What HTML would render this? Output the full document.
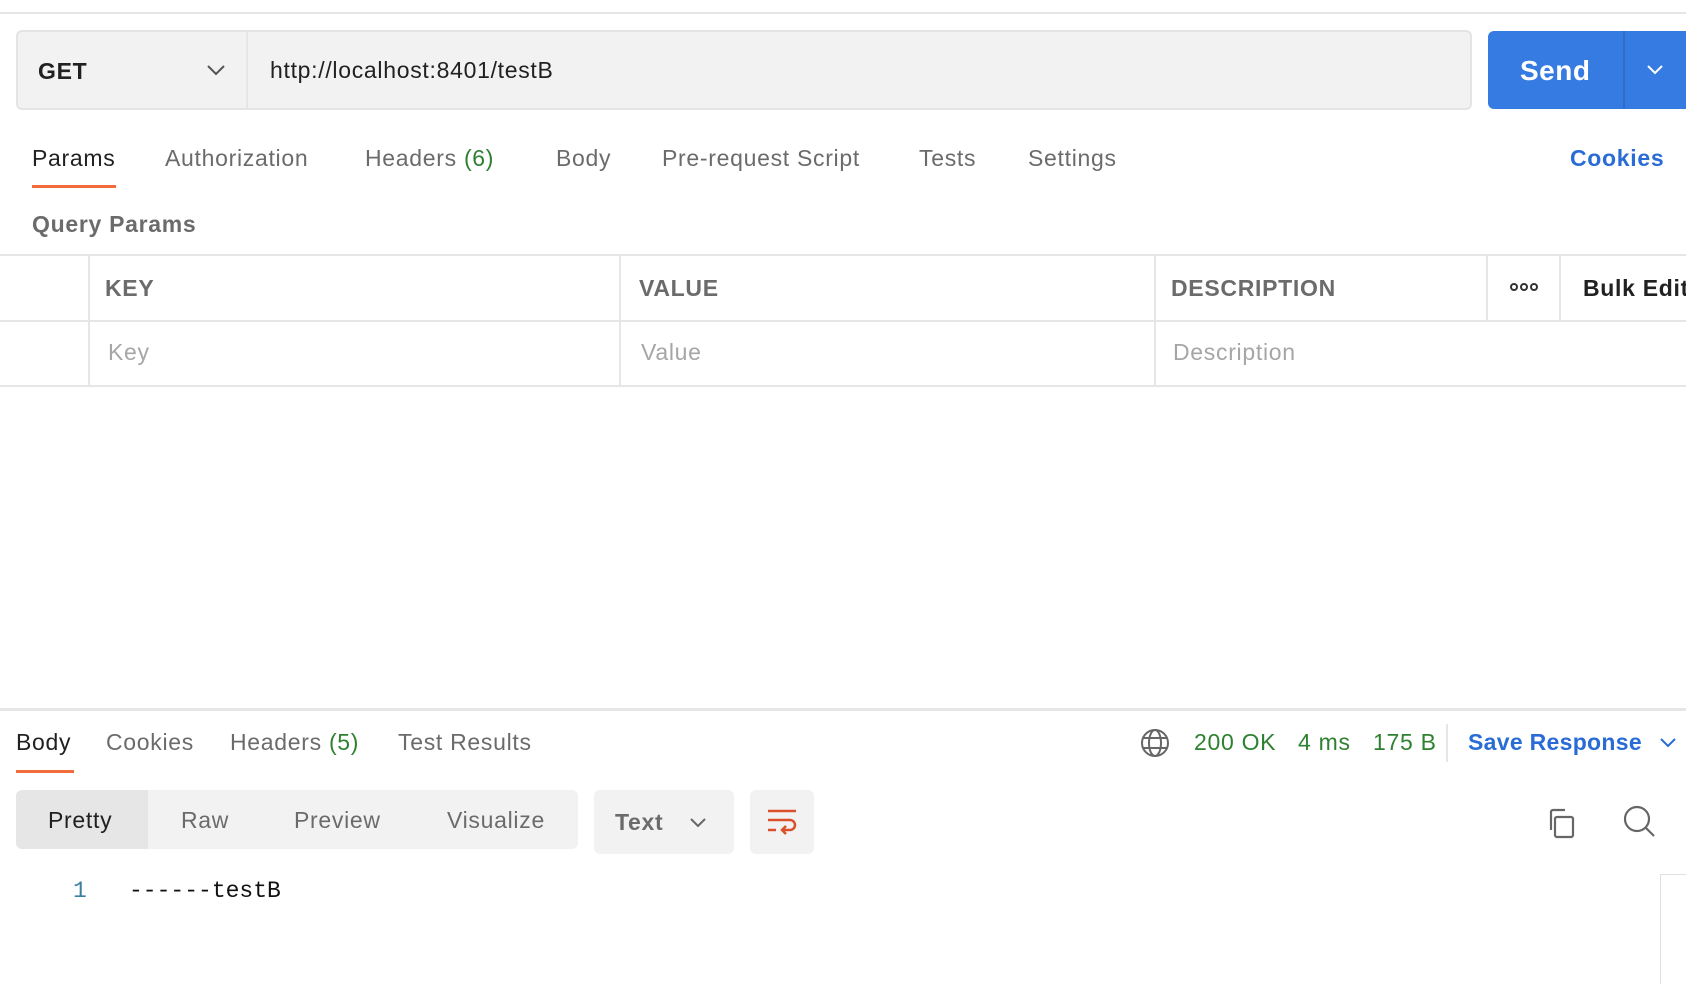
<!DOCTYPE html><html><head><style>
*{margin:0;padding:0;box-sizing:border-box}
body{width:1686px;height:974px;overflow:hidden;background:#fff;font-family:"Liberation Sans",sans-serif;position:relative;color:#6b6b6b}
.a{position:absolute;white-space:nowrap}
.t{font-size:23px;line-height:28px;letter-spacing:0.7px}
.hl{position:absolute;background:#e6e6e6;height:2px}
.vl{position:absolute;background:#e6e6e6;width:2px}
</style></head><body>
<div class="hl" style="left:0;top:12px;width:1686px"></div>
<div class="a" style="left:16px;top:30px;width:1456px;height:80px;background:#f2f2f2;border:2px solid #e4e4e4;border-radius:6px"></div>
<div class="vl" style="left:246px;top:31px;height:78px"></div>
<div class="a t" style="left:38px;top:57px;color:#212121;font-weight:bold">GET</div>
<svg class="a" style="left:206px;top:64px" width="20" height="12"><path d="M2 2l8 8 8-8" fill="none" stroke="#555" stroke-width="2"/></svg>
<div class="a t" style="left:270px;top:56px;color:#212121">http://localhost:8401/testB</div>
<div class="a" style="left:1488px;top:31px;width:198px;height:78px;background:#367be1;border-radius:6px 0 0 6px"></div>
<div class="vl" style="left:1623px;top:31px;height:78px;background:#2e6ccc"></div>
<div class="a" style="left:1520px;top:55px;font-size:28px;font-weight:bold;color:#fff;letter-spacing:0.5px">Send</div>
<svg class="a" style="left:1646px;top:64px" width="18" height="11"><path d="M2 2l7 7 7-7" fill="none" stroke="#fff" stroke-width="2"/></svg>
<div class="a t" style="left:32px;top:144px;color:#212121">Params</div>
<div class="a" style="left:32px;top:185px;width:84px;height:3px;background:#f26b3a"></div>
<div class="a t" style="left:165px;top:144px">Authorization</div>
<div class="a t" style="left:365px;top:144px">Headers <span style="color:#2f8132">(6)</span></div>
<div class="a t" style="left:556px;top:144px">Body</div>
<div class="a t" style="left:662px;top:144px">Pre-request Script</div>
<div class="a t" style="left:919px;top:144px">Tests</div>
<div class="a t" style="left:1028px;top:144px">Settings</div>
<div class="a t" style="left:1570px;top:144px;color:#2a6cd6;font-weight:bold">Cookies</div>
<div class="a t" style="left:32px;top:210px;font-weight:bold;color:#6b6b6b">Query Params</div>
<div class="hl" style="left:0;top:254px;width:1686px"></div>
<div class="hl" style="left:0;top:320px;width:1686px"></div>
<div class="hl" style="left:0;top:385px;width:1686px"></div>
<div class="vl" style="left:88px;top:255px;height:131px"></div>
<div class="vl" style="left:619px;top:255px;height:131px"></div>
<div class="vl" style="left:1154px;top:255px;height:131px"></div>
<div class="vl" style="left:1486px;top:255px;height:66px"></div>
<div class="vl" style="left:1559px;top:255px;height:66px"></div>
<div class="a t" style="left:105px;top:274px;font-weight:bold">KEY</div>
<div class="a t" style="left:639px;top:274px;font-weight:bold">VALUE</div>
<div class="a t" style="left:1171px;top:274px;font-weight:bold">DESCRIPTION</div>
<svg class="a" style="left:1509px;top:282px" width="30" height="10"><g fill="none" stroke="#333" stroke-width="2"><circle cx="5" cy="5" r="3"/><circle cx="15" cy="5" r="3"/><circle cx="25" cy="5" r="3"/></g></svg>
<div class="a t" style="left:1583px;top:274px;font-weight:bold;color:#212121">Bulk Edit</div>
<div class="a t" style="left:108px;top:338px;color:#a6a6a6">Key</div>
<div class="a t" style="left:641px;top:338px;color:#a6a6a6">Value</div>
<div class="a t" style="left:1173px;top:338px;color:#a6a6a6">Description</div>
<div class="hl" style="left:0;top:708px;width:1686px;height:3px"></div>
<div class="a t" style="left:16px;top:728px;color:#212121">Body</div>
<div class="a" style="left:16px;top:770px;width:58px;height:3px;background:#f26b3a"></div>
<div class="a t" style="left:106px;top:728px">Cookies</div>
<div class="a t" style="left:230px;top:728px">Headers <span style="color:#2f8132">(5)</span></div>
<div class="a t" style="left:398px;top:728px">Test Results</div>
<svg class="a" style="left:1140px;top:728px" width="30" height="30"><g fill="none" stroke="#666" stroke-width="2"><circle cx="15" cy="15" r="13"/><ellipse cx="15" cy="15" rx="6" ry="13"/><path d="M3 10h24M3 20h24"/></g></svg>
<div class="a t" style="left:1194px;top:728px;color:#2f8132">200 OK</div>
<div class="a t" style="left:1298px;top:728px;color:#2f8132">4 ms</div>
<div class="a t" style="left:1373px;top:728px;color:#2f8132">175 B</div>
<div class="vl" style="left:1446px;top:724px;height:38px"></div>
<div class="a t" style="left:1468px;top:728px;color:#2a6cd6;font-weight:bold;letter-spacing:0.3px">Save Response</div>
<svg class="a" style="left:1659px;top:737px" width="18" height="11"><path d="M2 2l7 7 7-7" fill="none" stroke="#2a6cd6" stroke-width="2"/></svg>
<div class="a" style="left:16px;top:790px;width:562px;height:59px;background:#f2f2f2;border-radius:6px"></div>
<div class="a" style="left:16px;top:790px;width:132px;height:59px;background:#e6e6e6;border-radius:6px 0 0 6px"></div>
<div class="a t" style="left:48px;top:806px;color:#212121">Pretty</div>
<div class="a t" style="left:181px;top:806px">Raw</div>
<div class="a t" style="left:294px;top:806px">Preview</div>
<div class="a t" style="left:447px;top:806px">Visualize</div>
<div class="a" style="left:594px;top:790px;width:140px;height:64px;background:#f2f2f2;border-radius:6px"></div>
<div class="a t" style="left:615px;top:808px;font-weight:bold">Text</div>
<svg class="a" style="left:689px;top:817px" width="18" height="11"><path d="M2 2l7 7 7-7" fill="none" stroke="#666" stroke-width="2"/></svg>
<div class="a" style="left:750px;top:790px;width:64px;height:64px;background:#f2f2f2;border-radius:6px"></div>
<svg class="a" style="left:766px;top:808px" width="32" height="30"><g fill="none" stroke="#d9502b" stroke-width="2.5"><path d="M2 3h28M2 12h22a5 5 0 0 1 0 10h-8M20 18l-4 4 4 4M2 22h8"/></g></svg>
<svg class="a" style="left:1545px;top:806px" width="32" height="34"><g fill="none" stroke="#666" stroke-width="2.2"><rect x="10" y="11" width="18" height="20" rx="2"/><path d="M6 24V6a2 2 0 0 1 2-2h12"/></g></svg>
<svg class="a" style="left:1622px;top:804px" width="36" height="36"><g fill="none" stroke="#666" stroke-width="2.2"><circle cx="15" cy="15" r="12"/><path d="M24 24l8 8"/></g></svg>
<div class="a" style="left:73px;top:878px;font-family:'Liberation Mono',monospace;font-size:23px;color:#3e7fa1">1</div>
<div class="a" style="left:129px;top:878px;font-family:'Liberation Mono',monospace;font-size:23px;color:#111">------testB</div>
<div class="a" style="left:1660px;top:874px;width:30px;height:110px;border-left:1px solid #e0e0e0;border-top:1px solid #e0e0e0"></div>
</body></html>
